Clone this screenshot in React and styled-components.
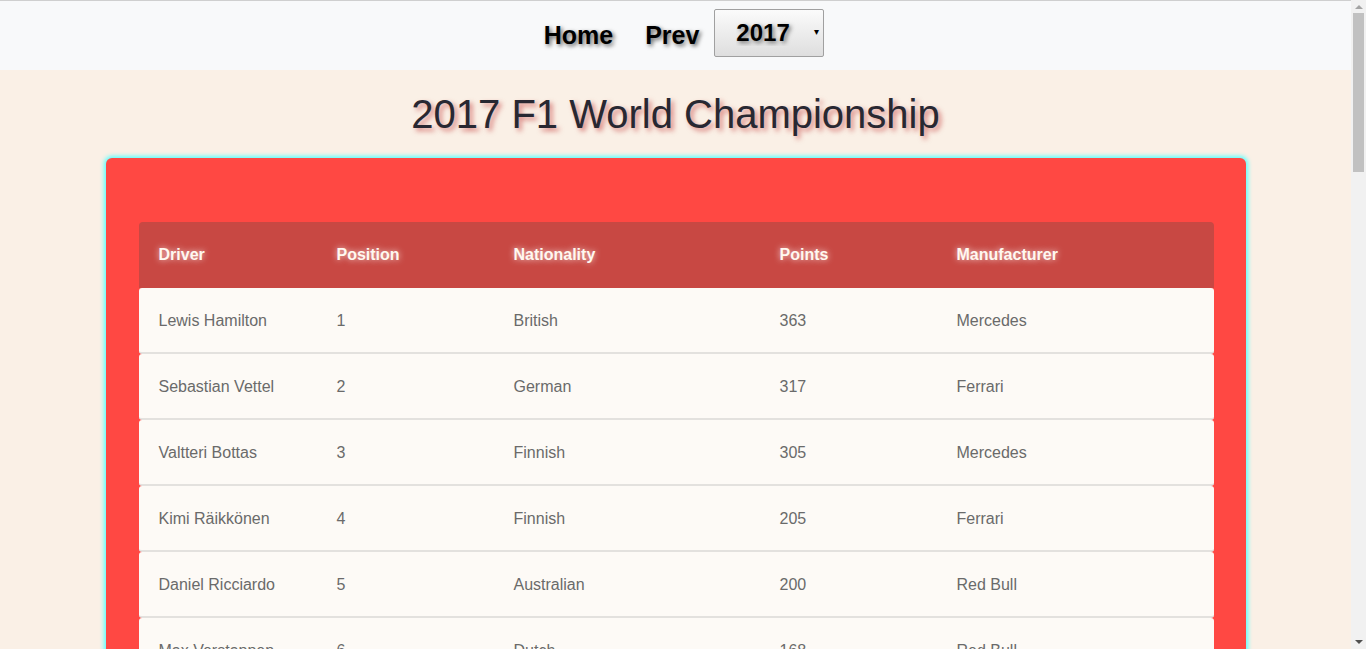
import React from 'react';
import styled, { createGlobalStyle } from 'styled-components';

const GlobalStyle = createGlobalStyle`
  html, body {
    margin: 0;
    height: 100%;
    overflow: hidden;
  }
  body {
    background: #faf0e6;
    font-family: 'Liberation Sans', Arial, sans-serif;
  }
  #root {
    height: 100%;
  }
`;

const standings = [
  ['Lewis Hamilton', 1, 'British', 363, 'Mercedes'],
  ['Sebastian Vettel', 2, 'German', 317, 'Ferrari'],
  ['Valtteri Bottas', 3, 'Finnish', 305, 'Mercedes'],
  ['Kimi Räikkönen', 4, 'Finnish', 205, 'Ferrari'],
  ['Daniel Ricciardo', 5, 'Australian', 200, 'Red Bull'],
  ['Max Verstappen', 6, 'Dutch', 168, 'Red Bull'],
  ['Sergio Pérez', 7, 'Mexican', 100, 'Force India'],
  ['Esteban Ocon', 8, 'French', 87, 'Force India'],
  ['Carlos Sainz', 9, 'Spanish', 54, 'Toro Rosso'],
  ['Nico Hülkenberg', 10, 'German', 43, 'Renault'],
  ['Felipe Massa', 11, 'Brazilian', 43, 'Williams'],
  ['Lance Stroll', 12, 'Canadian', 40, 'Williams'],
  ['Romain Grosjean', 13, 'French', 28, 'Haas F1 Team'],
  ['Kevin Magnussen', 14, 'Danish', 19, 'Haas F1 Team'],
  ['Fernando Alonso', 15, 'Spanish', 17, 'McLaren'],
  ['Stoffel Vandoorne', 16, 'Belgian', 13, 'McLaren'],
  ['Jolyon Palmer', 17, 'British', 8, 'Renault'],
  ['Pascal Wehrlein', 18, 'German', 5, 'Sauber'],
  ['Daniil Kvyat', 19, 'Russian', 5, 'Toro Rosso'],
  ['Marcus Ericsson', 20, 'Swedish', 0, 'Sauber'],
  ['Antonio Giovinazzi', 21, 'Italian', 0, 'Sauber'],
  ['Pierre Gasly', 22, 'French', 0, 'Toro Rosso'],
  ['Brendon Hartley', 23, 'New Zealander', 0, 'Toro Rosso'],
  ['Jenson Button', 24, 'British', 0, 'McLaren'],
  ['Paul di Resta', 25, 'British', 0, 'Williams']
];

const columns = ['Driver', 'Position', 'Nationality', 'Points', 'Manufacturer'];

const App = () => (
  <Window>
    <GlobalStyle />
    <Viewport>
      <NavBar>
        <NavLink>Home</NavLink>
        <NavLink>Prev</NavLink>
        <SelectWrap>
          <YearSelect defaultValue='2017'>
            <option value='2017'>2017</option>
          </YearSelect>
          <Caret>▾</Caret>
        </SelectWrap>
      </NavBar>
      <Title>2017 F1 World Championship</Title>
      <Card>
        <Table>
          <HeadRow>
            {columns.map(col => (
              <HeadCell key={col}>{col}</HeadCell>
            ))}
          </HeadRow>
          {standings.map(row => (
            <Row key={row[0]}>
              {row.map((value, i) => (
                <Cell key={i}>{value}</Cell>
              ))}
            </Row>
          ))}
        </Table>
      </Card>
    </Viewport>
    {/* classic scrollbar look */}
    <ScrollTrack>
      <ArrowUp />
      <Thumb />
      <ArrowDown />
    </ScrollTrack>
  </Window>
);

const Window = styled.div`
  display: flex;
  height: 100%;
`;

const Viewport = styled.div`
  flex: 1;
  min-width: 0;
  overflow-y: auto;
  scrollbar-width: none;
  &::-webkit-scrollbar {
    display: none;
  }
`;

const ScrollTrack = styled.div`
  width: 15px;
  flex-shrink: 0;
  background: #f1f1f1;
  display: flex;
  flex-direction: column;
  align-items: center;
`;

const ArrowUp = styled.div`
  margin-top: 5px;
  width: 0;
  height: 0;
  border-left: 4px solid transparent;
  border-right: 4px solid transparent;
  border-bottom: 4px solid #a3a3a3;
`;

const Thumb = styled.div`
  margin-top: 4px;
  width: 11px;
  height: 159px;
  background: #c1c1c1;
`;

const ArrowDown = styled.div`
  margin-top: auto;
  margin-bottom: 5px;
  width: 0;
  height: 0;
  border-left: 4px solid transparent;
  border-right: 4px solid transparent;
  border-top: 4px solid #505050;
`;

const NavBar = styled.nav`
  height: 70px;
  box-sizing: border-box;
  border-top: 1px solid #cfcfcf;
  background: #f8f9fa;
  display: flex;
  align-items: center;
  justify-content: center;
  gap: 16px;
  padding: 0 0 7px 9px;
`;

const NavLink = styled.a`
  font-size: 25px;
  font-weight: bold;
  color: #000;
  text-shadow: 2px 2px 4px rgba(0, 0, 0, 0.6);
  padding: 0 8px;
  cursor: pointer;
  margin-top: 6px;
`;

const SelectWrap = styled.div`
  position: relative;
  margin-left: -9px;
  margin-top: 1px;
`;

const YearSelect = styled.select`
  display: block;
  width: 110px;
  height: 48px;
  appearance: none;
  font-family: 'Liberation Sans', Arial, sans-serif;
  font-size: 24px;
  font-weight: bold;
  color: #000;
  text-shadow: 2px 2px 4px rgba(0, 0, 0, 0.5);
  border: 1px solid #a0a0a0;
  border-radius: 2px;
  padding: 0 0 0 21px;
  background: linear-gradient(#fbfbfb, #dedede);
`;

const Caret = styled.span`
  position: absolute;
  right: 5px;
  top: 17px;
  font-size: 10px;
  color: #000;
  pointer-events: none;
`;

const Title = styled.h1`
  margin: 20px 0 20px;
  line-height: 48px;
  text-align: center;
  font-size: 40px;
  font-weight: normal;
  color: #282832;
  text-shadow: 3px 3px 5px rgba(190, 40, 40, 0.55);
`;

const Card = styled.div`
  width: 1140px;
  box-sizing: border-box;
  margin: 0 auto 40px;
  padding: 64px 32px 32px 33px;
  background: #ff4843;
  border-radius: 6px;
  box-shadow: 0 0 4px 2px #5cffff;
`;

const Table = styled.div`
  display: flex;
  flex-direction: column;
`;

const grid = `
  display: grid;
  grid-template-columns: 178px 177px 266px 177px 1fr;
  height: 66px;
  align-items: center;
`;

const HeadRow = styled.div`
  ${grid}
  background: #c84843;
  border-radius: 4px 4px 0 0;
`;

const HeadCell = styled.div`
  padding-left: 20px;
  font-size: 16px;
  font-weight: bold;
  color: #fff8f0;
  text-shadow: 0 0 6px rgba(255, 255, 255, 0.8);
`;

const Row = styled.div`
  ${grid}
  box-sizing: border-box;
  background: #fdfaf6;
  border-bottom: 2px solid #e3e1de;
  border-radius: 3px;
`;

const Cell = styled.div`
  padding-left: 20px;
  padding-top: 2px;
  font-size: 16px;
  color: #6a6a6a;
`;

export default App;
